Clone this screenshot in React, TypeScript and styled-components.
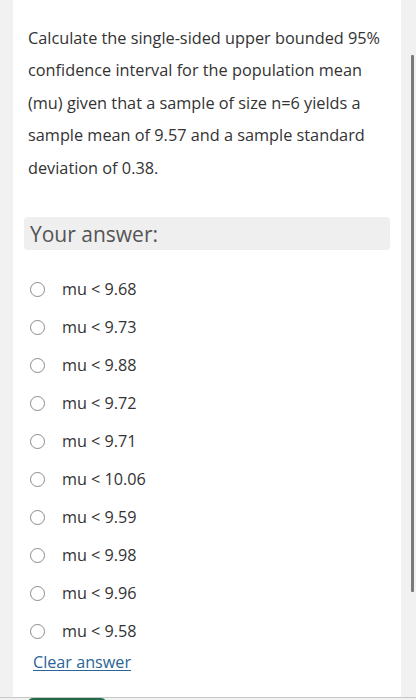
import React from "react";
import styled, { createGlobalStyle } from "styled-components";

const Global = createGlobalStyle`
  html, body { margin: 0; padding: 0; background: #f1f1f1; }
  body { font-family: "Open Sans", "Noto Sans", sans-serif; color: #333; }
  #root { height: 700px; overflow: hidden; }
`;

const Page = styled.div`
  display: flex;
  flex-direction: column;
  height: 700px;
  overflow: hidden;
  background: #f1f1f1;
`;

const Top = styled.div`
  display: flex;
  height: 697px;
  flex: none;
`;

const Gutter = styled.div<{ $w: number }>`
  width: ${(p) => p.$w}px;
  flex: none;
  background: #f1f1f1;
`;

const RightGutter = styled.div`
  width: 15px;
  flex: none;
  background: #f1f1f1;
  display: flex;
  justify-content: flex-end;
  padding-top: 55px;
  padding-right: 2px;
  box-sizing: border-box;
`;

const Thumb = styled.div`
  width: 3px;
  height: 537px;
  background: #7a7a7a;
  border-radius: 1px;
`;

const Panel = styled.main`
  flex: 1;
  background: #fff;
  padding: 22px 11px 0 11px;
  box-sizing: border-box;
`;

const Question = styled.p`
  margin: 0 0 33px 4px;
  font-size: 16.3px;
  line-height: 32.4px;
  color: #333;
  padding-right: 2px;
`;

const AnswerBox = styled.div`
  background: #efefef;
  border-radius: 4px;
  height: 33px;
  display: flex;
  align-items: center;
  padding-left: 6px;
  font-size: 21px;
  color: #555;
  margin-bottom: 20px;
`;

const Options = styled.div`
  display: flex;
  flex-direction: column;
`;

const Row = styled.label`
  display: flex;
  align-items: center;
  height: 38px;
  padding-left: 6px;
  font-size: 16.2px;
  color: #333;
  gap: 17px;
`;

const Radio = styled.span`
  width: 15px;
  height: 15px;
  box-sizing: border-box;
  border: 1.5px solid #8a8a8a;
  border-radius: 50%;
  flex: none;
`;

const Clear = styled.a`
  display: inline-block;
  margin-left: 9px;
  line-height: 24px;
  font-size: 16.2px;
  color: #2b6496;
  text-decoration: underline;
  text-underline-offset: 2px;
`;

const Bottom = styled.div`
  flex: 1;
  border-top: 1px solid #c8c8c8;
  padding-left: 27px;
`;

const Submit = styled.div`
  width: 80px;
  height: 10px;
  background: #1f6b47;
  border-radius: 6px 6px 0 0;
`;

const options = ["9.68", "9.73", "9.88", "9.72", "9.71", "10.06", "9.59", "9.98", "9.96", "9.58"];

export default function App() {
  return (
    <Page>
      <Global />
      <Top>
        <Gutter $w={13} />
        <Panel>
          <Question>
            Calculate the single-sided upper bounded 95% confidence interval for the population mean
            (mu) given that a sample of size n=6 yields a sample mean of 9.57 and a sample standard
            deviation of 0.38.
          </Question>
          <AnswerBox>Your answer:</AnswerBox>
          <Options>
            {options.map((o) => (
              <Row key={o}>
                <Radio />
                <span>mu &lt; {o}</span>
              </Row>
            ))}
          </Options>
          <Clear>Clear answer</Clear>
        </Panel>
        <RightGutter>
          <Thumb />
        </RightGutter>
      </Top>
      <Bottom>
        <Submit />
      </Bottom>
    </Page>
  );
}
